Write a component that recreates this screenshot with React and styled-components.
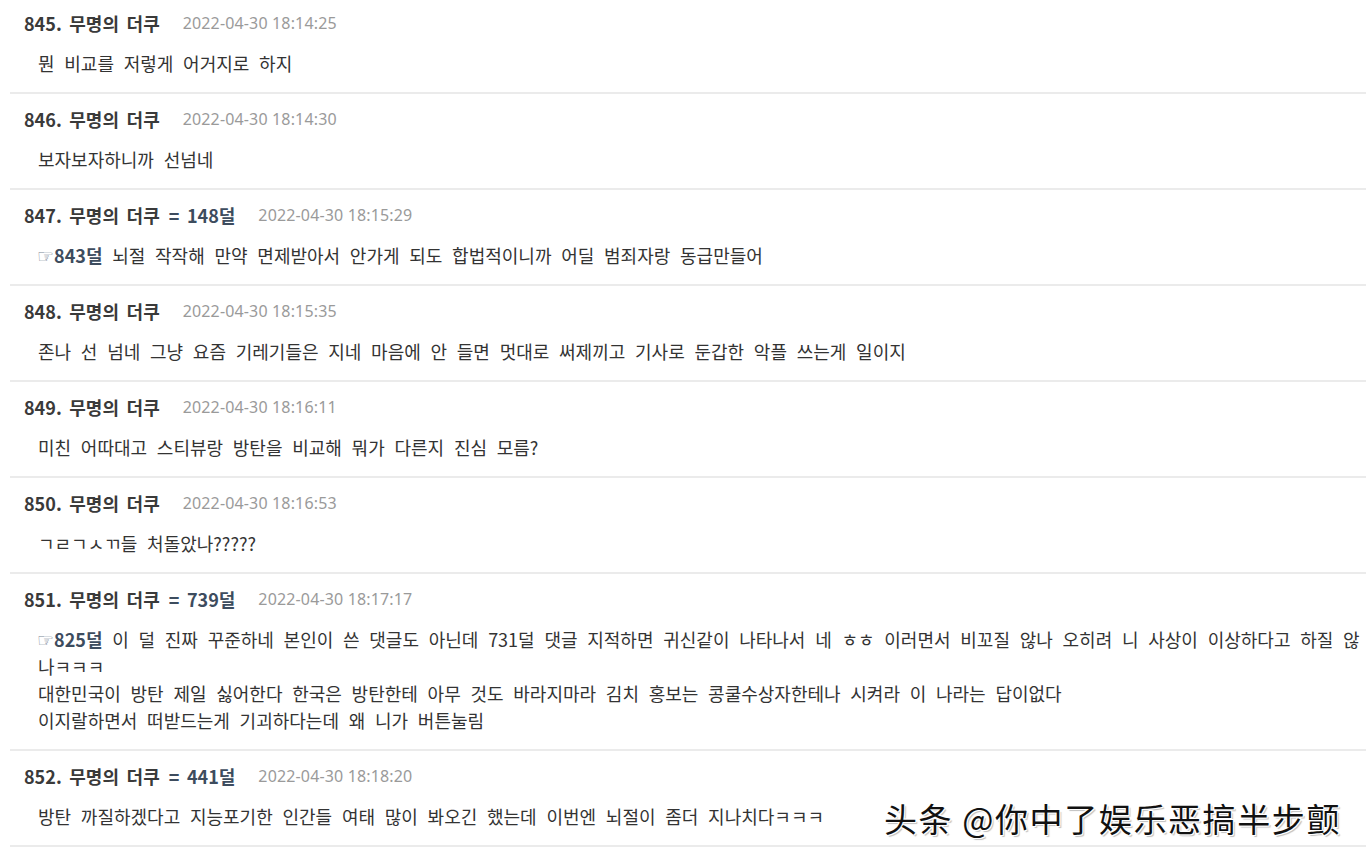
import React from "react";
import styled, { createGlobalStyle } from "styled-components";

const Global = createGlobalStyle`
  html, body { margin: 0; padding: 0; background: #fff; }
  body {
    font-family: "Noto Sans CJK KR", "Noto Sans", sans-serif;
    color: #333;
    overflow: hidden;
  }
`;

const Page = styled.div`
  position: relative;
  width: 1366px;
  height: 860px;
  overflow: hidden;
  background: #fff;
`;

const List = styled.div`
  margin-left: 10px;
  margin-top: -2px;
  display: flex;
  flex-direction: column;
`;

const Entry = styled.div`
  display: flex;
  flex-direction: column;
  gap: 14px;
  padding: 12px 0 15.4px 14px;
  border-bottom: 2px solid #ebebeb;
`;

const Header = styled.div`
  display: flex;
  align-items: center;
  height: 26px;
  white-space: nowrap;
`;

const Name = styled.span`
  font-size: 18px;
  font-weight: 700;
  color: #3a3a3a;
  word-spacing: 3.5px;
`;

const Ref = styled.span`
  font-size: 18px;
  font-weight: 700;
  color: #3d4c5e;
  margin-left: 9px;
  word-spacing: 3.5px;
`;

const DateText = styled.span`
  font-family: "Noto Sans", sans-serif;
  font-size: 16px;
  letter-spacing: 0.15px;
  color: #9a9a9a;
  margin-left: 23px;
`;

const Body = styled.div`
  padding-left: 14px;
  display: flex;
  flex-direction: column;
`;

const Line = styled.div`
  font-size: 18px;
  line-height: 26.7px;
  height: 26.7px;
  color: #333;
  white-space: nowrap;
  word-spacing: 5.7px;
`;

const Anchor = styled.span`
  font-weight: 700;
  color: #3d4c5e;
  word-spacing: 0;
`;

const Hand = styled.span`
  font-family: "DejaVu Sans", sans-serif;
  font-weight: 400;
  font-size: 19px;
  line-height: 1;
  color: #7b8796;
  margin-left: -1px;
`;

const Watermark = styled.div`
  position: absolute;
  left: 884px;
  top: 794px;
  font-family: "Noto Sans CJK SC", sans-serif;
  font-size: 33px;
  font-weight: 400;
  color: #111;
  letter-spacing: 1.6px;
  white-space: nowrap;
  text-shadow: 1px 1px 0 #fff, -1px -1px 0 #fff, 1px -1px 0 #fff, -1px 1px 0 #fff,
    2px 2px 1px rgba(0, 0, 0, 0.25);
`;

const entries = [
  { no: 845, time: "18:14:25", lines: ["뭔 비교를 저렇게 어거지로 하지"] },
  { no: 846, time: "18:14:30", lines: ["보자보자하니까 선넘네"] },
  {
    no: 847,
    ref: "148덜",
    time: "18:15:29",
    anchor: "843덜",
    lines: [" 뇌절 작작해 만약 면제받아서 안가게 되도 합법적이니까 어딜 범죄자랑 동급만들어"],
  },
  {
    no: 848,
    time: "18:15:35",
    lines: ["존나 선 넘네 그냥 요즘 기레기들은 지네 마음에 안 들면 멋대로 써제끼고 기사로 둔갑한 악플 쓰는게 일이지"],
  },
  { no: 849, time: "18:16:11", lines: ["미친 어따대고 스티뷰랑 방탄을 비교해 뭐가 다른지 진심 모름?"] },
  { no: 850, time: "18:16:53", lines: ["ㄱㄹㄱㅅㄲ들 처돌았나?????"] },
  {
    no: 851,
    ref: "739덜",
    time: "18:17:17",
    anchor: "825덜",
    lines: [
      " 이 덜 진짜 꾸준하네 본인이 쓴 댓글도 아닌데 731덜 댓글 지적하면 귀신같이 나타나서 네 ㅎㅎ 이러면서 비꼬질 않나 오히려 니 사상이 이상하다고 하질 않",
      "나ㅋㅋㅋ",
      "대한민국이 방탄 제일 싫어한다 한국은 방탄한테 아무 것도 바라지마라 김치 홍보는 콩쿨수상자한테나 시켜라 이 나라는 답이없다",
      "이지랄하면서 떠받드는게 기괴하다는데 왜 니가 버튼눌림",
    ],
  },
  {
    no: 852,
    ref: "441덜",
    time: "18:18:20",
    lines: ["방탄 까질하겠다고 지능포기한 인간들 여태 많이 봐오긴 했는데 이번엔 뇌절이 좀더 지나치다ㅋㅋㅋ"],
  },
];

export default function App() {
  return (
    <Page>
      <Global />
      <List>
        {entries.map((e) => (
          <Entry key={e.no}>
            <Header>
              <Name>{e.no}. 무명의 더쿠</Name>
              {e.ref && <Ref>= {e.ref}</Ref>}
              <DateText>2022-04-30 {e.time}</DateText>
            </Header>
            <Body>
              {e.lines.map((l, i) => (
                <Line key={i}>
                  {i === 0 && e.anchor && (
                    <Anchor>
                      <Hand>☞</Hand>
                      {e.anchor}
                    </Anchor>
                  )}
                  {l}
                </Line>
              ))}
            </Body>
          </Entry>
        ))}
      </List>
      <Watermark>头条 @你中了娱乐恶搞半步颤</Watermark>
    </Page>
  );
}
